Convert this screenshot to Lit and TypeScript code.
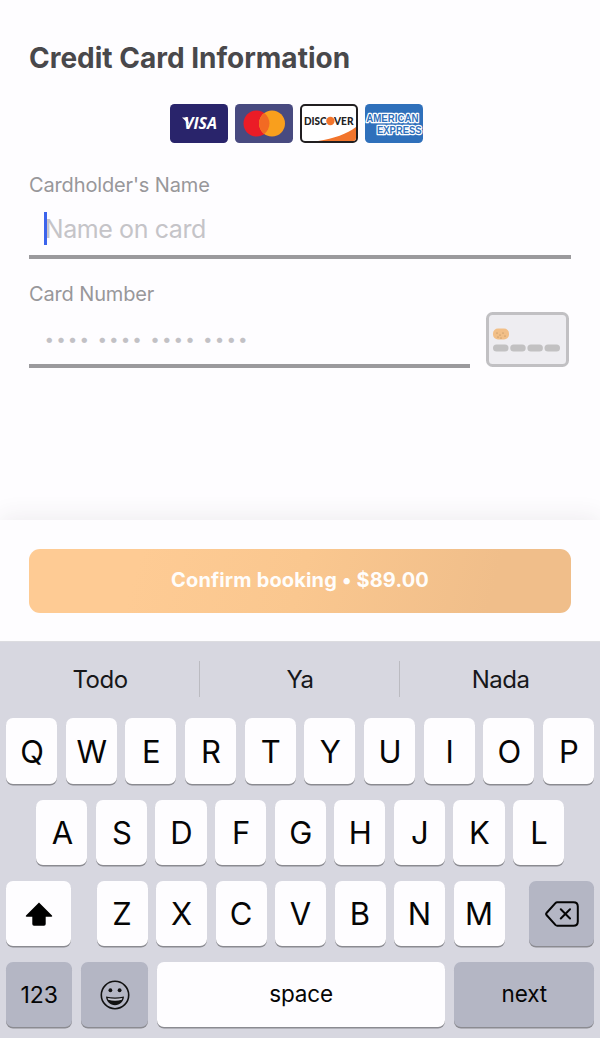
import { LitElement, html, css, svg } from "lit";
import { customElement } from "lit/decorators.js";

@customElement("card-brands")
class CardBrands extends LitElement {
  static styles = css`
    :host { display: flex; justify-content: center; gap: 7.2px; padding-right: 7px; }
    svg { display: block; width: 58px; height: 39px; }
    text { font-family: "Open Sans", "Noto Sans", sans-serif; font-weight: 700; }
    .amex { font-family: "Liberation Sans", sans-serif; }
    .disc { font-family: Lato, sans-serif; font-weight: 900; }
  `;
  render() {
    return html`
      <svg viewBox="0 0 58 39">
        <rect width="58" height="39" rx="4.5" fill="#29246b" />
        <path d="M12 13.5h5.2l2 7z" fill="#fff" />
        <text x="14" y="25.3" font-size="16" font-style="italic" fill="#fff" textLength="33" lengthAdjust="spacingAndGlyphs">VISA</text>
      </svg>
      <svg viewBox="0 0 58 39">
        <rect width="58" height="39" rx="4.5" fill="#484a80" />
        <circle cx="21.5" cy="19.5" r="13" fill="#eb1c26" />
        <circle cx="37" cy="19.5" r="13" fill="#f99f1d" />
        <path d="M29.25 9.1a13 13 0 0 1 0 20.8a13 13 0 0 1 0-20.8z" fill="#f26a23" />
      </svg>
      <svg viewBox="0 0 58 39">
        <rect x="1" y="1" width="56" height="37" rx="4" fill="#fff" stroke="#211e20" stroke-width="2" />
        <path d="M18 37C34 34.5 47 30 56 23v11q0 3-3 3z" fill="#f2752c" />
        <text class="disc" x="4" y="20.9" font-size="11" fill="#222" textLength="22.7" lengthAdjust="spacingAndGlyphs">DISC</text>
        <circle cx="30.4" cy="17" r="4.2" fill="#f2752c" />
        <text class="disc" x="34" y="20.9" font-size="11" fill="#222" textLength="19.5" lengthAdjust="spacingAndGlyphs">VER</text>
      </svg>
      <svg viewBox="0 0 58 39">
        <rect width="58" height="39" rx="4.5" fill="#2f70bb" />
        <g fill="#2f70bb" stroke="#fff" stroke-width="2.6" stroke-linejoin="round" paint-order="stroke">
          <text class="amex" x="1.2" y="18" font-size="10.4" textLength="52.3" lengthAdjust="spacingAndGlyphs">AMERICAN</text>
          <text class="amex" x="12" y="30.4" font-size="10.4" textLength="44.6" lengthAdjust="spacingAndGlyphs">EXPRESS</text>
        </g>
      </svg>
    `;
  }
}

@customElement("payment-form")
class PaymentForm extends LitElement {
  static styles = css`
    :host { display: block; box-sizing: border-box; height: 519.5px; padding: 36.5px 29px 0; background: #fefdff; }
    h1 { margin: 0; height: 42px; line-height: 42px; font-size: 28px; font-weight: 700; letter-spacing: 0; color: #49484b; white-space: nowrap; }
    card-brands { margin-top: 25px; }
    .label { height: 26px; line-height: 26px; font-size: 20px; letter-spacing: -0.14px; color: #98979a; white-space: nowrap; }
    .first { margin-top: 29.5px; }
    .second { margin-top: 22px; }
    .field { box-sizing: border-box; height: 61px; border-bottom: 4px solid #9b9a9d; display: flex; align-items: center; padding: 4px 0 0 14.5px; }
    .caret { width: 3px; height: 33px; background: #3c64ec; margin-right: -1.8px; z-index: 1; }
    .placeholder { font-size: 25px; color: #c5c4c8; white-space: nowrap; letter-spacing: -0.4px; }
    .row { display: flex; justify-content: space-between; }
    .number { width: 440.5px; padding: 7px 0 0 14.5px; gap: 6.3px; }
    .group { display: flex; }
    .dot { width: 11.65px; text-align: center; font-size: 17px; line-height: 20px; color: #c2c1c5; }
    .card { width: 83px; height: 55px; margin: 5px 2px 0 0; }
  `;
  render() {
    return html`
      <h1>Credit Card Information</h1>
      <card-brands></card-brands>
      <div class="label first">Cardholder's Name</div>
      <div class="field"><span class="caret"></span><span class="placeholder">Name on card</span></div>
      <div class="label second">Card Number</div>
      <div class="row">
        <div class="field number">
          ${[0, 1, 2, 3].map(() => html`<span class="group">${[0, 1, 2, 3].map(() => html`<span class="dot">•</span>`)}</span>`)}
        </div>
        <svg class="card" viewBox="0 0 83 55">
          <rect x="1.5" y="1.5" width="80" height="52" rx="5" fill="#eeedf1" stroke="#c1c0c3" stroke-width="3" />
          <rect x="7" y="16.5" width="16" height="11" rx="5" fill="#f2bf87" />
          <g fill="#98764f"><circle cx="11" cy="21" r=".5" /><circle cx="14" cy="23" r=".5" /><circle cx="17" cy="21" r=".5" /><circle cx="12" cy="25" r=".5" /><circle cx="19" cy="24" r=".5" /><circle cx="15" cy="26" r=".5" /></g>
          ${[7, 24.2, 41.4, 58.5].map((x) => svg`<rect x=${x} y="32.5" width="15.5" height="7" rx="3.5" fill="#c2c1c2" />`)}
        </svg>
      </div>
    `;
  }
}

@customElement("ios-keyboard")
class IosKeyboard extends LitElement {
  static styles = css`
    :host { display: block; box-sizing: border-box; height: 397px; padding: 0 6px; background: #d7d7e0; border-top: 1px solid #dcdce0; color: #050505; }
    .suggest { display: grid; grid-template-columns: repeat(3, 1fr); margin: 0 -6px; height: 36px; padding: 18.5px 0 21.9px; }
    .suggest span { display: flex; align-items: center; justify-content: center; font-size: 24px; letter-spacing: -0.5px; color: #17171a; border-right: 1px solid #bbbbc1; padding: 1px 0 0 1px; }
    .suggest span:last-child { border-right: 0; }
    .row { display: flex; gap: 8.5px; height: 65.2px; margin-bottom: 16.1px; }
    .key { flex: 1; display: flex; align-items: center; justify-content: center; border-radius: 7px; background: #fefdff; box-shadow: 0 1.6px 0 #8b8b91; font-size: 31px; padding: 1px 0 0 1px; box-sizing: border-box; }
    .mid { margin-left: 30.3px; margin-right: 29.8px; }
    .letters { display: flex; gap: 8.5px; width: 408px; margin-left: 1px; }
    .letters .key { padding: 0; }
    .thirds { justify-content: space-between; }
    .side { flex: 0 0 65px; }
    .dark { background: #b4b6c4; }
    .small { font-size: 22.5px; letter-spacing: -0.15px; padding: 0 0 2px 1px; }
    .num { font-size: 23px; padding: 0; }
    .bottom { gap: 9px; }
    .func { flex: 0 0 66.3px; }
    .next { flex: 0 0 140.5px; }
    svg { display: block; }
  `;
  private keys(s: string) {
    return [...s].map((k) => html`<span class="key">${k}</span>`);
  }
  render() {
    return html`
      <div class="suggest"><span>Todo</span><span>Ya</span><span>Nada</span></div>
      <div class="row">${this.keys("QWERTYUIOP")}</div>
      <div class="row mid">${this.keys("ASDFGHJKL")}</div>
      <div class="row thirds">
        <span class="key side">
          <svg width="28" height="24" viewBox="0 0 28 24"><path d="M14 0.6 27 13.6Q27.8 14.7 26.5 14.7H20.7V22Q20.7 23.8 19 23.8H9Q7.3 23.8 7.3 22V14.7H1.5Q.2 14.7 1 13.6Z" fill="#000" /></svg>
        </span>
        <div class="letters">${this.keys("ZXCVBNM")}</div>
        <span class="key side dark">
          <svg width="34" height="26" viewBox="0 0 34 26" fill="none" stroke="#050505" stroke-width="2" stroke-linecap="round" stroke-linejoin="round"><path d="M12.2 1.3H28.5Q32.8 1.3 32.8 5.6V20.4Q32.8 24.7 28.5 24.7H12.2Q11.2 24.7 10.4 23.9L1.5 14Q.7 13 1.5 12L10.4 2.1Q11.2 1.3 12.2 1.3ZM15.8 8.3l9.2 9.2M25 8.3l-9.2 9.2" /></svg>
        </span>
      </div>
      <div class="row bottom">
        <span class="key func dark small num">123</span>
        <span class="key func dark">
          <svg width="30" height="30" viewBox="0 0 30 30" fill="#111"><circle cx="15" cy="15" r="13.7" fill="none" stroke="#111" stroke-width="1.6" /><ellipse cx="10.4" cy="10.2" rx="1.9" ry="2" /><ellipse cx="19.6" cy="10.2" rx="1.9" ry="2" /><path d="M6 16.6Q15 18.6 24 16.6C23.6 22 19.8 25.2 15 25.2S6.4 22 6 16.6Z" /><path d="M7.6 18.1Q15 19.6 22.4 18.1L21.8 19.8Q15 21.6 8.2 19.8Z" fill="#c5c6d0" /></svg>
        </span>
        <span class="key small">space</span>
        <span class="key next dark small">next</span>
      </div>
    `;
  }
}

@customElement("app-root")
class AppRoot extends LitElement {
  static styles = css`
    :host { display: flex; flex-direction: column; width: 600px; height: 1038px; overflow: hidden; font-family: Inter, "Liberation Sans", sans-serif; background: #fefdff; }
    .checkout { position: relative; box-sizing: border-box; height: 121.5px; padding: 29.5px 29px 0; background: #fefdff; box-shadow: 0 -4px 22px rgba(60, 50, 70, 0.08); }
    .confirm { display: flex; align-items: center; justify-content: center; width: 100%; height: 63.5px; padding: 0 0 1px; border: 0; border-radius: 11px; background: linear-gradient(105deg, #fecb94 20%, #fac78f 50%, #f0be8a 85%); color: #fffdfb; font: 700 20px Inter, "Liberation Sans", sans-serif; letter-spacing: 0.16px; }
    ios-keyboard { position: relative; }
  `;
  render() {
    return html`
      <payment-form></payment-form>
      <div class="checkout"><button class="confirm">Confirm booking • $89.00</button></div>
      <ios-keyboard></ios-keyboard>
    `;
  }
}
